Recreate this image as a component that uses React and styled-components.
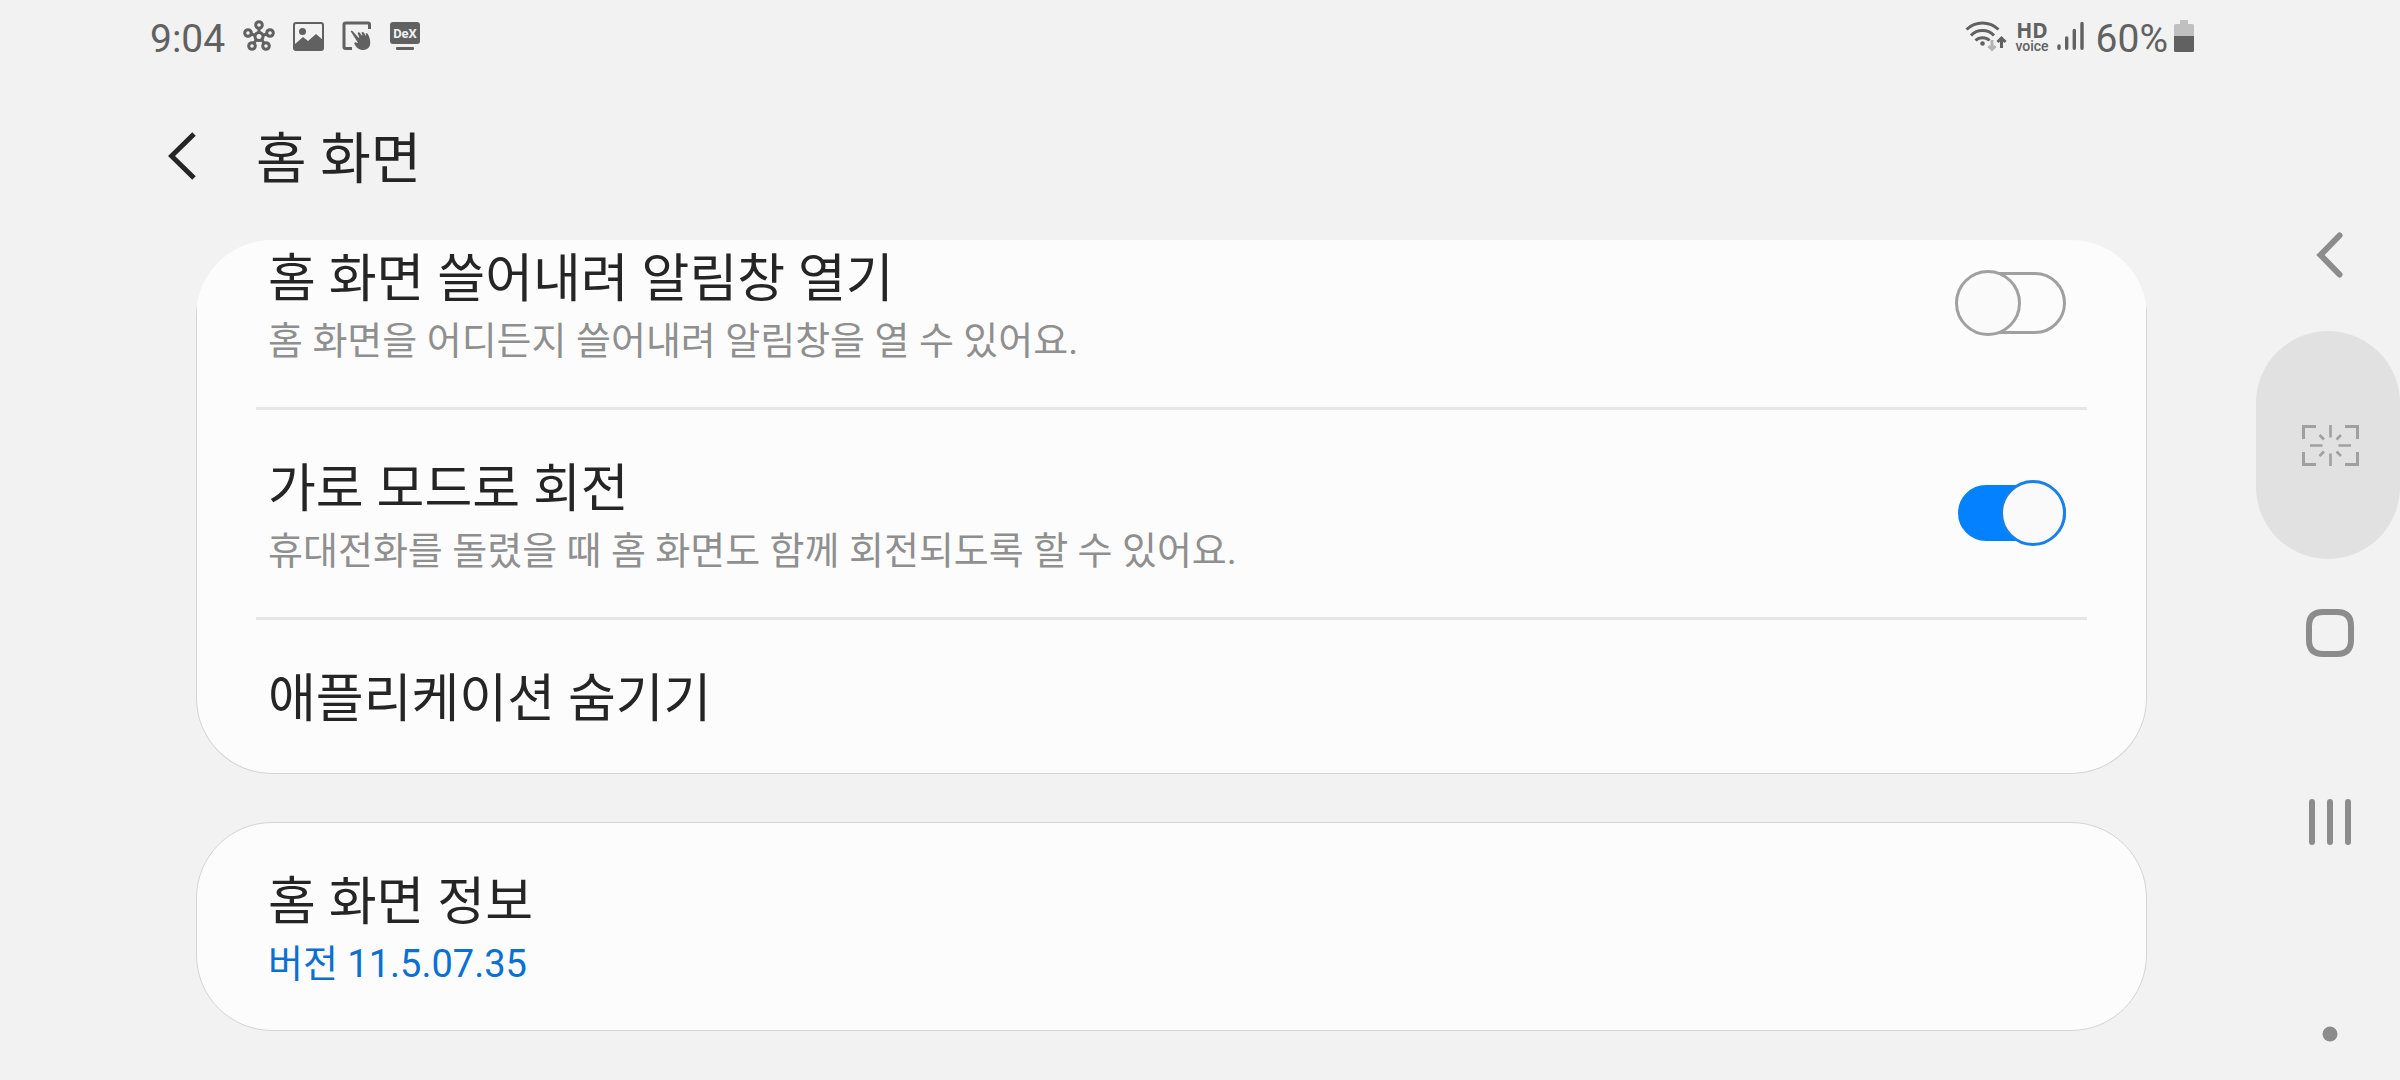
import React, { useState } from 'react'
import styled, { createGlobalStyle } from 'styled-components'

const GlobalStyle = createGlobalStyle`
    *, *::before, *::after {
        box-sizing: border-box;
    }

    body {
        margin: 0;
        background: #f2f2f2;
        color: #252525;
        font-family: Roboto, 'Noto Sans CJK KR', sans-serif;
    }

    h1, h2, p {
        margin: 0;
        font-weight: 400;
    }

    button {
        padding: 0;
        border: none;
        background: none;
        color: inherit;
        font: inherit;
        cursor: pointer;
    }

    svg {
        display: block;
        flex: none;
    }
`

const Screen = styled.div`
    display: flex;
    min-height: 100vh;
`

const Main = styled.main`
    flex: 1;
    min-width: 0;
    display: flex;
    flex-direction: column;
`

const StatusBar = styled.div`
    display: flex;
    justify-content: space-between;
    align-items: center;
    height: 72px;
    padding: 0 62px 0 150px;
    color: #616161;
`

const StatusGroup = styled.div`
    display: flex;
    align-items: center;
    gap: ${({ $gap }) => $gap}px;
`

const StatusText = styled.span`
    padding-top: 6px;
    font-size: 39px;
    line-height: 48px;
`

const HdVoice = styled.div`
    display: flex;
    flex-direction: column;
    align-items: center;
    font-family: 'Noto Sans', sans-serif;
    font-size: 21px;
    font-weight: 700;
    line-height: 20px;

    small {
        font-family: Roboto, sans-serif;
        font-size: 14px;
        font-weight: 500;
        line-height: 12px;
    }
`

const Header = styled.header`
    display: flex;
    align-items: center;
    gap: 60px;
    height: 168px;
    padding-left: 168px;

    h1 {
        padding-top: 6px;
        font-size: 55px;
        line-height: 76px;
    }
`

// clips the list with rounded top corners while it is scrolled
const ScrollArea = styled.div`
    margin: 0 109px 48px 196px;
    border-radius: 76px 76px 0 0;
    overflow: hidden;
`

const List = styled.div`
    display: flex;
    flex-direction: column;
    gap: 48px;
    margin-top: -40px;
`

const Card = styled.section`
    padding: 0 59px;
    border: 1px solid #d4d4d4;
    border-radius: ${({ $scrolled }) => ($scrolled ? '0 0 76px 76px' : '76px')};
    border-top-width: ${({ $scrolled }) => ($scrolled ? 0 : 1)}px;
    background: #fcfcfc;
`

const Row = styled.div`
    display: flex;
    justify-content: space-between;
    align-items: center;
    width: 100%;
    padding: 44px 21px ${({ $single }) => ($single ? 37 : 41)}px 12px;
    text-align: left;

    & + & {
        border-top: 3px solid #e6e6e6;
    }
`

const Texts = styled.span`
    display: flex;
    flex-direction: column;
`

const Title = styled.span`
    font-size: 52px;
    line-height: 72px;
`

const Summary = styled.span`
    color: ${({ $accent }) => ($accent ? '#0a70d2' : '#8f8f8f')};
    font-size: 38px;
    line-height: 50px;
`

const Switch = styled.input`
    appearance: none;
    flex: none;
    display: grid;
    align-items: center;
    width: 111px;
    height: 66px;
    margin: 0 0 4px;
    cursor: pointer;

    &::before,
    &::after {
        content: '';
        grid-area: 1 / 1;
        border: 3px solid #a0a0a0;
        border-radius: 33px;
    }

    &::before {
        justify-self: end;
        width: 108px;
        height: 62px;
    }

    &::after {
        justify-self: start;
        width: 66px;
        height: 66px;
        background: #fafafa;
    }

    &:checked::before {
        height: 56px;
        border-color: #0381fe;
        background: #0381fe;
    }

    &:checked::after {
        justify-self: end;
        border-color: #1a7fe6;
    }
`

const NavBar = styled.nav`
    display: flex;
    flex-direction: column;
    flex: none;
    width: 144px;
    padding: 160px 0 38px;
    color: #8c8c8c;
`

const NavButton = styled.button`
    display: flex;
    justify-content: center;
    align-items: center;
    height: 189px;
    padding-left: 4px;
`

const CaptureButton = styled(NavButton)`
    height: 228px;
    margin: -18px 0 -21px;
    border-radius: 72px;
    background: #e1e1e1;
    color: #a0a0a0;
`

const NavDot = styled(NavButton)`
    height: 16px;
    margin-top: auto;
`

const FlowerIcon = () => (
    <svg width='32' height='32' viewBox='0 0 32 32' fill='none' stroke='currentColor' strokeWidth='3'>
        <circle cx='16' cy='16.5' r='4' />
        <circle cx='16' cy='5' r='3.3' />
        <circle cx='27' cy='13' r='3.3' />
        <circle cx='23' cy='26' r='3.3' />
        <circle cx='9' cy='26' r='3.3' />
        <circle cx='5' cy='13' r='3.3' />
        <path d='M16 8v5M24 14l-4 1.300M21 23l-2.500-3.500M11 23l2.500-3.500M8 14l4 1.300' />
    </svg>
)

const PictureIcon = () => (
    <svg width='31' height='29' viewBox='0 0 31 29'>
        <rect x='1' y='1' width='29' height='27' rx='2' fill='none' stroke='currentColor' strokeWidth='2' />
        <circle cx='9.500' cy='9.500' r='3.500' fill='currentColor' />
        <path d='M2 22l8-7 5 4 8-7 7 6v10H2z' fill='currentColor' />
    </svg>
)

const TouchIcon = () => (
    <svg width='30' height='30' viewBox='0 0 30 30'>
        <path d='M10 27.500H3.500a1.500 1.500 0 0 1-1.500-1.500V3.500A1.500 1.500 0 0 1 3.500 2H26a1.500 1.500 0 0 1 1.500 1.500V8' fill='none' stroke='currentColor' strokeWidth='3' />
        <path d='M8.700 10.200c.8-.7 1.700-.3 2.300.4l5.500 6.100.8-.5-1.800-4.200c.9-1 2.100-.8 2.700.2l1.500 2.300.7-.3-.9-2.600c.9-.9 2.100-.6 2.700.5l1.200 2.400.6-.2-.3-1.700c.9-.6 1.800-.3 2.300.7 1.600 3.100 2.300 5.700 2.200 8.700-.1 4-2.300 6.400-6.200 6.900-3.700.4-5.900-1-8-3.400L12.500 23c-.6-1.200.3-2 1.600-1.600l2 .7z' fill='currentColor' />
    </svg>
)

const DexIcon = () => (
    <svg width='30' height='30' viewBox='0 0 30 30'>
        <rect x='0' y='1' width='30' height='22' rx='3' fill='currentColor' />
        <rect x='6' y='26' width='18' height='3' rx='1' fill='currentColor' />
        <text x='15' y='17' textAnchor='middle' fontSize='13' fontWeight='700' fill='#f2f2f2'>DeX</text>
    </svg>
)

const WifiIcon = () => (
    <svg width='42' height='32' viewBox='0 0 42 32' fill='none' stroke='currentColor' strokeWidth='3'>
        <path d='M1.500 9.500a23 23 0 0 1 32 0' />
        <path d='M6 15.500a16 16 0 0 1 23 0' />
        <path d='M10.500 20.500a10 10 0 0 1 14 0' />
        <circle cx='17.500' cy='23.500' r='2.300' fill='currentColor' stroke='none' />
        <path d='M27 20v9M23.500 26l3.500 3.500 3.500-3.500' stroke='#b4b4b4' />
        <path d='M36.500 28v-9M32.500 22l4-4 4 4' />
    </svg>
)

const SignalIcon = () => (
    <svg width='27' height='30' viewBox='0 0 27 30' fill='none' stroke='currentColor' strokeWidth='3.400' strokeLinecap='round'>
        <path d='M2 25v2.300M9.700 17v10.300M17.300 9.500v17.800M25 2.500v24.800' />
    </svg>
)

const BatteryIcon = () => (
    <svg width='20' height='32' viewBox='0 0 20 32'>
        <path d='M6 0h8v4h4.500A1.500 1.500 0 0 1 20 5.500V16H0V5.500A1.500 1.500 0 0 1 1.500 4H6z' fill='#c0c0c0' />
        <path d='M0 16h20v14.500a1.500 1.500 0 0 1-1.500 1.500h-17A1.500 1.500 0 0 1 0 30.500z' fill='currentColor' />
    </svg>
)

const BackIcon = () => (
    <svg width='28' height='48' viewBox='0 0 28 48' fill='none' stroke='currentColor' strokeWidth='5'>
        <path d='M26 2L3.500 24 26 46' />
    </svg>
)

const NavBackIcon = () => (
    <svg width='28' height='46' viewBox='0 0 28 46' fill='none' stroke='currentColor' strokeWidth='6' strokeLinecap='round'>
        <path d='M23.500 3.500L4.500 23l19 19.500' />
    </svg>
)

const CaptureIcon = () => (
    <svg width='57' height='41' viewBox='0 0 57 41' fill='none' stroke='currentColor' strokeWidth='3'>
        <path d='M1.500 14V1.500H14M43 1.500h12.500V14M55.500 27v12.500H43M14 39.500H1.500V27' />
        <path d='M28.500 0v12.500M28.500 28.500V41M8 20.500h12.500M36.500 20.500H49M17.500 10l4.500 4.500M39 10l-4.500 4.500M17.500 31l4.500-4.500M39 31l-4.500-4.500' strokeWidth='2.600' />
    </svg>
)

const HomeIcon = () => (
    <svg width='48' height='48' viewBox='0 0 48 48' fill='none' stroke='currentColor' strokeWidth='6'>
        <path d='M17 3h14q14 0 14 14v14q0 14-14 14H17Q3 45 3 31V17Q3 3 17 3z' />
    </svg>
)

const RecentsIcon = () => (
    <svg width='42' height='46' viewBox='0 0 42 46' fill='none' stroke='currentColor' strokeWidth='6' strokeLinecap='round'>
        <path d='M3 3v40M21 3v40M39 3v40' />
    </svg>
)

const DotIcon = () => (
    <svg width='16' height='16' viewBox='0 0 16 16'>
        <circle cx='8' cy='8' r='7.500' fill='currentColor' />
    </svg>
)

const SwitchRow = ({ title, summary, defaultOn }) => {
    const [on, setOn] = useState(defaultOn)

    return (
        <Row as='label'>
            <Texts>
                <Title>{title}</Title>
                <Summary>{summary}</Summary>
            </Texts>
            <Switch
                type='checkbox'
                role='switch'
                checked={on}
                onChange={(e) => setOn(e.target.checked)}
            />
        </Row>
    )
}

const App = () => {
    return (
        <Screen>
            <GlobalStyle />
            <Main>
                <StatusBar>
                    <StatusGroup $gap={18}>
                        <StatusText>9:04</StatusText>
                        <FlowerIcon />
                        <PictureIcon />
                        <TouchIcon />
                        <DexIcon />
                    </StatusGroup>
                    <StatusGroup $gap={12}>
                        <StatusGroup $gap={8}>
                            <WifiIcon />
                            <HdVoice>
                                HD
                                <small>voice</small>
                            </HdVoice>
                            <SignalIcon />
                        </StatusGroup>
                        <StatusGroup $gap={6}>
                            <StatusText>60%</StatusText>
                            <BatteryIcon />
                        </StatusGroup>
                    </StatusGroup>
                </StatusBar>
                <Header>
                    <button aria-label='뒤로'>
                        <BackIcon />
                    </button>
                    <h1>홈 화면</h1>
                </Header>
                <ScrollArea>
                    <List>
                        <Card $scrolled>
                            <SwitchRow
                                title='홈 화면 쓸어내려 알림창 열기'
                                summary='홈 화면을 어디든지 쓸어내려 알림창을 열 수 있어요.'
                                defaultOn={false}
                            />
                            <SwitchRow
                                title='가로 모드로 회전'
                                summary='휴대전화를 돌렸을 때 홈 화면도 함께 회전되도록 할 수 있어요.'
                                defaultOn={true}
                            />
                            <Row as='button' $single>
                                <Title>애플리케이션 숨기기</Title>
                            </Row>
                        </Card>
                        <Card>
                            <Row as='button'>
                                <Texts>
                                    <Title>홈 화면 정보</Title>
                                    <Summary $accent>버전 11.5.07.35</Summary>
                                </Texts>
                            </Row>
                        </Card>
                    </List>
                </ScrollArea>
            </Main>
            <NavBar>
                <NavButton aria-label='이전'>
                    <NavBackIcon />
                </NavButton>
                <CaptureButton aria-label='화면 캡처'>
                    <CaptureIcon />
                </CaptureButton>
                <NavButton aria-label='홈'>
                    <HomeIcon />
                </NavButton>
                <NavButton aria-label='최근 앱'>
                    <RecentsIcon />
                </NavButton>
                <NavDot aria-label='내비게이션 바 숨기기'>
                    <DotIcon />
                </NavDot>
            </NavBar>
        </Screen>
    )
}

export default App
